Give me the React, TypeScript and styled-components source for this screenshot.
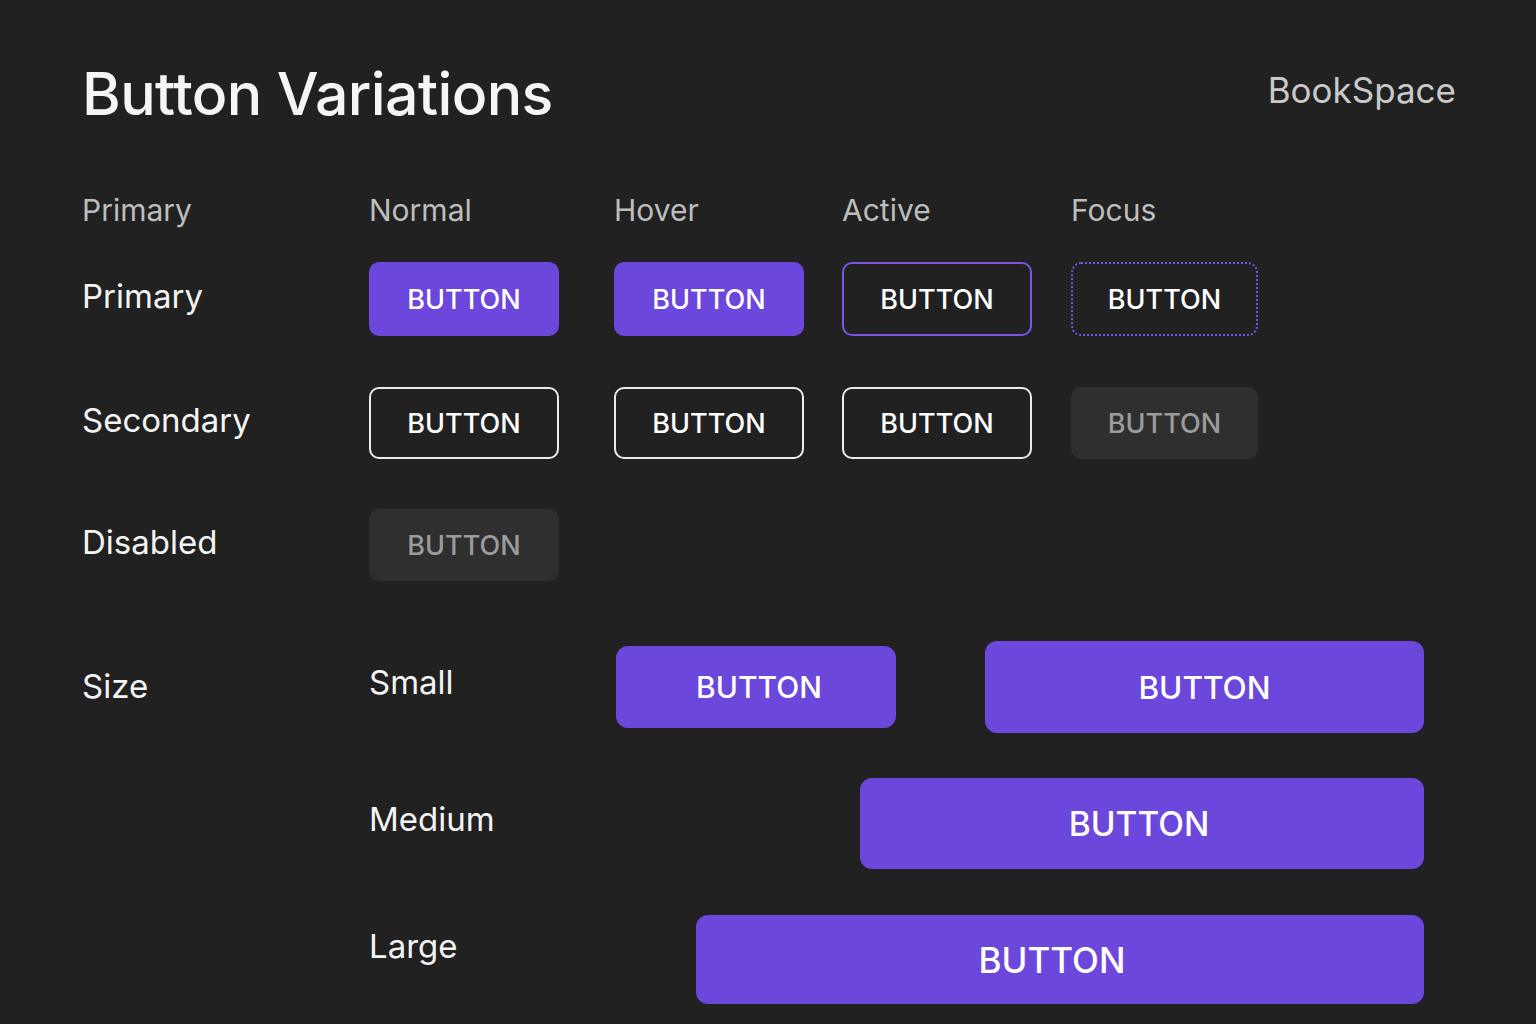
import React from 'react';
import styled, { createGlobalStyle } from 'styled-components';

const GlobalStyle = createGlobalStyle`
  html, body {
    margin: 0;
    padding: 0;
    background: #212121;
  }
  body {
    font-family: Inter, "Noto Sans", "Liberation Sans", sans-serif;
    color: #f4f4f4;
  }
`;

const Page = styled.div`
  width: 1536px;
  height: 1024px;
  box-sizing: border-box;
  padding: 60px 80px 0 82px;
  overflow: hidden;
`;

const Header = styled.header`
  display: flex;
  align-items: center;
  justify-content: space-between;
  height: 66px;
`;

const Title = styled.h1`
  margin: 0;
  font-size: 59px;
  font-weight: 500;
  letter-spacing: -0.6px;
  color: #f5f5f5;
`;

const Brand = styled.div`
  font-size: 35px;
  font-weight: 400;
  color: #c9c9c9;
  margin-top: -6px;
`;

const StateRow = styled.div<{ $height: number; $top: number }>`
  display: grid;
  grid-template-columns: 287px 245px 228px 229px 187px;
  align-items: center;
  height: ${p => p.$height}px;
  margin-top: ${p => p.$top}px;
`;

const ColHead = styled.div`
  font-size: 30px;
  color: #bdbdbd;
`;

const RowLabel = styled.div`
  font-size: 33px;
  color: #f4f4f4;
  margin-bottom: 7px;
`;

type Variant = 'primary' | 'outlinePurple' | 'focus' | 'outline' | 'disabled';

const variantCss: Record<Variant, string> = {
  primary: 'background: #6c47dc; border: 2px solid #6c47dc; color: #ffffff;',
  outlinePurple: 'background: transparent; border: 2px solid #7a55e8; color: #ffffff;',
  focus: 'background: transparent; border: 2px dotted #7a55e8; color: #ffffff;',
  outline: 'background: transparent; border: 2px solid #ececec; color: #ffffff;',
  disabled: 'background: #2f2f2f; border: 2px solid #2f2f2f; color: #9c9c9c;',
};

const StateButton = styled.button<{ $variant: Variant; $w?: number }>`
  width: ${p => p.$w ?? 190}px;
  height: 100%;
  box-sizing: border-box;
  border-radius: 10px;
  font-family: Inter, "Noto Sans", sans-serif;
  font-size: 27px;
  font-weight: 500;
  padding: 0;
  ${p => variantCss[p.$variant]}
`;

const SizeRow = styled.div<{ $height: number; $top: number }>`
  display: grid;
  grid-template-columns: 287px 247px 1fr;
  align-items: center;
  height: ${p => p.$height}px;
  margin-top: ${p => p.$top}px;
  margin-right: 32px;
`;

const SizeLabel = styled.div<{ $lift?: number }>`
  font-size: 33px;
  color: #f4f4f4;
  margin-bottom: ${p => (p.$lift ?? 0) * 2}px;
`;

const ButtonArea = styled.div<{ $spread?: boolean }>`
  display: flex;
  align-items: center;
  justify-content: ${p => (p.$spread ? 'space-between' : 'flex-end')};
  height: 100%;
`;

/* $nudge moves the label sideways inside the button: negative = left */
const SizeButton = styled.button<{ $w: number; $h: number; $fs: number; $nudge?: number }>`
  width: ${p => p.$w}px;
  height: ${p => p.$h}px;
  border: none;
  border-radius: 12px;
  background: #6c47dc;
  color: #ffffff;
  font-family: Inter, "Noto Sans", sans-serif;
  font-size: ${p => p.$fs}px;
  font-weight: 500;
  padding: 0;
  padding-left: ${p => Math.max(0, (p.$nudge ?? 0) * 2)}px;
  padding-right: ${p => Math.max(0, -(p.$nudge ?? 0) * 2)}px;
`;

const App: React.FC = () => {
  return (
    <Page>
      <GlobalStyle />
      <Header>
        <Title>Button Variations</Title>
        <Brand>BookSpace</Brand>
      </Header>

      <StateRow $height={50} $top={59}>
        <ColHead>Primary</ColHead>
        <ColHead>Normal</ColHead>
        <ColHead>Hover</ColHead>
        <ColHead>Active</ColHead>
        <ColHead>Focus</ColHead>
      </StateRow>

      <StateRow $height={74} $top={27}>
        <RowLabel>Primary</RowLabel>
        <StateButton $variant="primary">BUTTON</StateButton>
        <StateButton $variant="primary">BUTTON</StateButton>
        <StateButton $variant="outlinePurple">BUTTON</StateButton>
        <StateButton $variant="focus" $w={187}>BUTTON</StateButton>
      </StateRow>

      <StateRow $height={72} $top={51}>
        <RowLabel>Secondary</RowLabel>
        <StateButton $variant="outline">BUTTON</StateButton>
        <StateButton $variant="outline">BUTTON</StateButton>
        <StateButton $variant="outline">BUTTON</StateButton>
        <StateButton $variant="disabled" $w={187}>BUTTON</StateButton>
      </StateRow>

      <StateRow $height={72} $top={50}>
        <RowLabel>Disabled</RowLabel>
        <StateButton $variant="disabled">BUTTON</StateButton>
      </StateRow>

      <SizeRow $height={92} $top={60}>
        <SizeLabel $lift={1}>Size</SizeLabel>
        <SizeLabel $lift={5}>Small</SizeLabel>
        <ButtonArea $spread>
          <SizeButton $w={280} $h={82} $fs={30} $nudge={3}>BUTTON</SizeButton>
          <SizeButton $w={439} $h={92} $fs={31.5}>BUTTON</SizeButton>
        </ButtonArea>
      </SizeRow>

      <SizeRow $height={91} $top={45}>
        <div />
        <SizeLabel $lift={5}>Medium</SizeLabel>
        <ButtonArea>
          <SizeButton $w={564} $h={91} $fs={33.5} $nudge={-3}>BUTTON</SizeButton>
        </ButtonArea>
      </SizeRow>

      <SizeRow $height={89} $top={46}>
        <div />
        <SizeLabel $lift={14}>Large</SizeLabel>
        <ButtonArea>
          <SizeButton $w={728} $h={89} $fs={35} $nudge={-8}>BUTTON</SizeButton>
        </ButtonArea>
      </SizeRow>
    </Page>
  );
};

export default App;
